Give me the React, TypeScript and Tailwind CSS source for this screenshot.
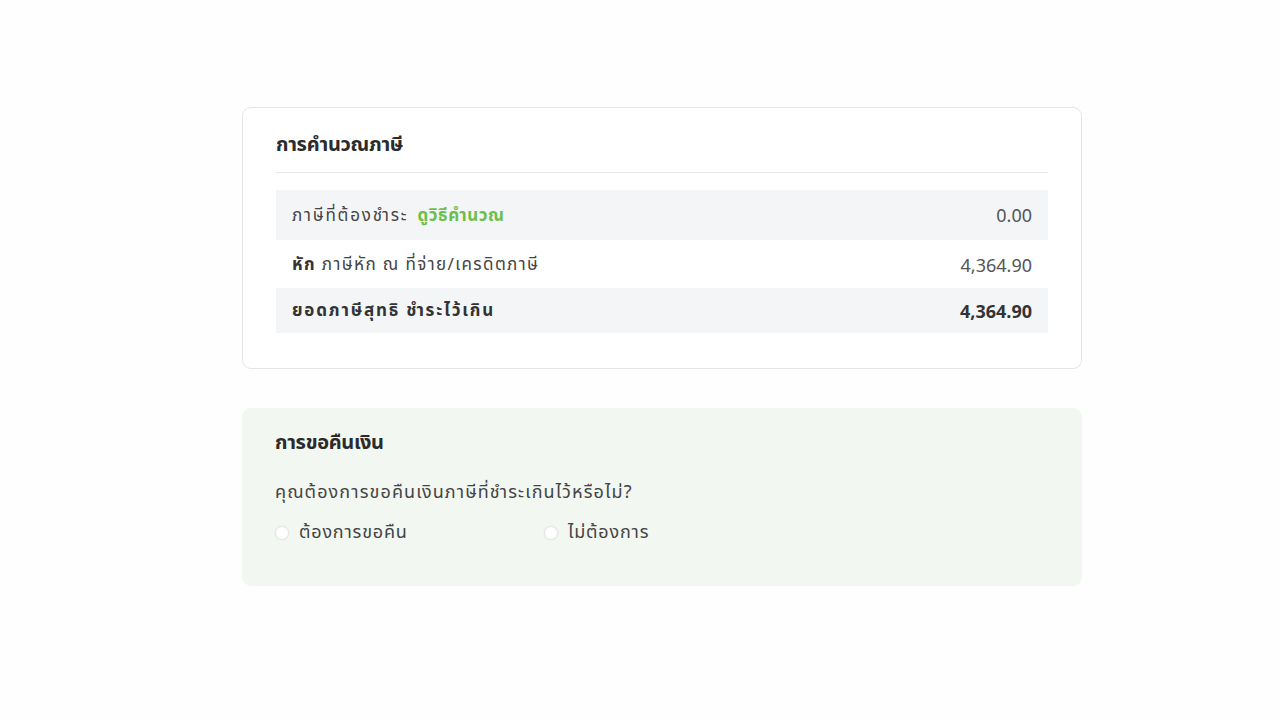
import React from "react";

export default function App() {
  const font = { fontFamily: '"Noto Sans Thai", "Noto Sans", "Open Sans", sans-serif' };
  return (
    <div className="min-h-[720px] w-full bg-[#fefefe] flex justify-center pl-[44px] pt-[107px] text-[#333]" style={font}>
      <div className="w-[840px] flex flex-col gap-[39px]">
        <div className="border border-[#e3e5e8] rounded-[9px] bg-white px-[33px] pt-[19px] pb-[35px]">
          <div className="text-[20px] font-bold text-[#2b2b2b] tracking-[-0.3px] h-[36px] flex items-center">การคำนวณภาษี</div>
          <div className="border-b border-[#e6e8eb] mt-[9px] mb-[17px]" />
          <div className="text-[17px]">
            <div className="flex items-center justify-between h-[50px] px-[16px] pt-[3px] bg-[#f4f5f7]">
              <div className="flex items-center gap-[9px] text-[#444]">
                <span className="tracking-[1.8px]">ภาษีที่ต้องชำระ</span>
                <span className="text-[#6cbf4a] font-bold text-[17px] tracking-[0.6px]">ดูวิธีคำนวณ</span>
              </div>
              <span className="text-[#555] text-[18px]">0.00</span>
            </div>
            <div className="flex items-center justify-between h-[48px] px-[16px] pt-[4px]">
              <div className="text-[#444] tracking-[1.4px]"><span className="font-bold text-[#333]">หัก</span> ภาษีหัก ณ ที่จ่าย/เครดิตภาษี</div>
              <span className="text-[#555] text-[18px]">4,364.90</span>
            </div>
            <div className="flex items-center justify-between h-[45px] px-[16px] pt-[3px] bg-[#f4f5f7] font-bold text-[#333]">
              <span className="tracking-[1.8px]">ยอดภาษีสุทธิ ชำระไว้เกิน</span>
              <span className="text-[18px]">4,364.90</span>
            </div>
          </div>
        </div>
        <div className="rounded-[9px] bg-[#f2f7f1] px-[33px] pt-[20px] pb-[40px]">
          <div className="text-[20px] font-bold text-[#2b2b2b] tracking-[-0.3px] h-[30px] flex items-center">การขอคืนเงิน</div>
          <div className="mt-[21px] text-[18px] tracking-[1.1px] text-[#444]">คุณต้องการขอคืนเงินภาษีที่ชำระเกินไว้หรือไม่?</div>
          <div className="flex items-center mt-[13px] text-[18px] tracking-[0.8px] text-[#444]">
            <label className="flex items-center gap-[10px] w-[269px]">
              <span className="w-[14px] h-[14px] rounded-full bg-white border border-[#e6e6e6] shadow-[0_0_2px_rgba(0,0,0,0.08)]" />
              <span>ต้องการขอคืน</span>
            </label>
            <label className="flex items-center gap-[10px]">
              <span className="w-[14px] h-[14px] rounded-full bg-white border border-[#e6e6e6] shadow-[0_0_2px_rgba(0,0,0,0.08)]" />
              <span>ไม่ต้องการ</span>
            </label>
          </div>
        </div>
      </div>
    </div>
  );
}
